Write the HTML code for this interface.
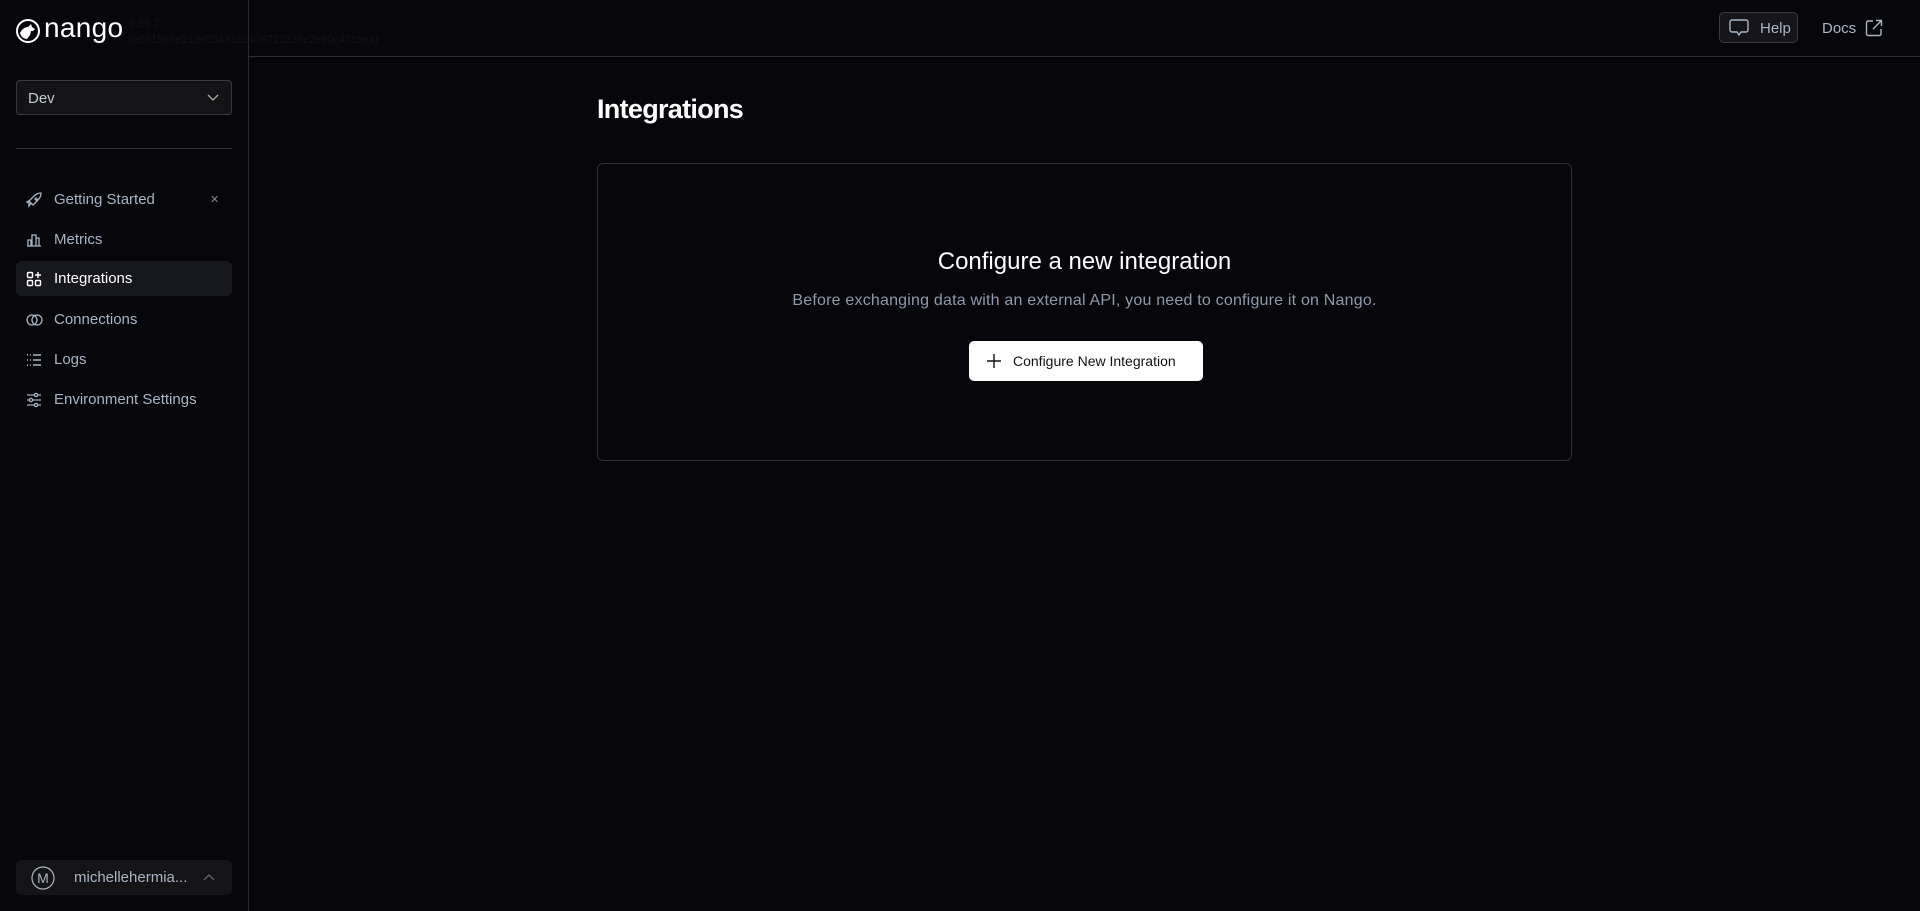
<!DOCTYPE html>
<html><head><meta charset="utf-8"><style>
*{box-sizing:border-box;margin:0;padding:0}
body{width:1920px;height:911px;background:#06060b;font-family:"Liberation Sans",sans-serif;color:#a9b5c5;position:relative;overflow:hidden}
.side{position:absolute;left:0;top:0;width:249px;height:911px;border-right:1px solid #2a2a2e}
.hdr{position:absolute;left:249px;top:56px;right:0;border-top:1px solid #2d2d31}
.logo{position:absolute;left:16px;top:17px;display:flex;align-items:center;color:#fff;font-size:28px;font-weight:normal;letter-spacing:0.3px}
.ver{position:absolute;left:129px;top:16px;font-size:11px;color:#141418;line-height:16px}
.sel{position:absolute;left:16px;top:80px;width:216px;height:35px;border:1px solid #3a3a3e;border-radius:4px;background:#141416;color:#c5ccd6;font-size:15px;padding:9px 11px}
.div{position:absolute;left:16px;top:148px;width:216px;border-top:1px solid #333338}
.nav{position:absolute;left:16px;width:216px;height:35px;border-radius:6px;display:flex;align-items:center;font-size:15px;color:#a9b5c5}
.nav svg{position:absolute;left:10px;top:10px}
.nav span{position:absolute;left:38px}
.nav.act{background:#17171e;color:#fff}
.user{position:absolute;left:16px;top:860px;width:216px;height:35px;border-radius:5px;background:#141416;font-size:15px;color:#a9b5c5}
.help{position:absolute;left:1719px;top:12px;width:79px;height:31px;border:1px solid #3a3a40;border-radius:5px;background:#15151b;font-size:15px;color:#a9b5c5}
h1{position:absolute;left:597px;top:94px;font-size:27px;color:#fff;font-weight:bold;letter-spacing:-0.7px}
.card{position:absolute;left:597px;top:163px;width:975px;height:298px;border:1px solid #2f2f34;border-radius:6px;text-align:center}
.card h2{position:absolute;top:84px;width:100%;font-size:24px;font-weight:normal;color:#fff}
.card p{position:absolute;top:128px;width:100%;font-size:16px;color:#8e9aab;letter-spacing:0.2px}
.btn{position:absolute;left:371px;top:177px;width:234px;height:40px;background:#fff;border-radius:5px;color:#111;font-size:14px;line-height:40px;text-align:left;padding-left:44px}
</style></head><body>
<div class="side">
<div class="logo"><svg width="24" height="24" viewBox="0 0 24 24"><circle cx="12" cy="12" r="11" fill="none" stroke="#fff" stroke-width="2"/><path d="M4 14c2-4 5-6 8-6l3-3 1 3 3 2-2 2-2 0-1 4-3 4c-3 0-6-2-7-6z" fill="#fff"/></svg><span style="margin-left:4px;margin-top:-5px">nango</span></div>
<div class="ver">0.59.7<br>(e5515e6e21de35481ac406721235c2e90c47c5ea)</div>
<div class="sel">Dev<svg style="position:absolute;right:12px;top:13px" width="12" height="8" viewBox="0 0 12 8"><path d="M1 1l5 5 5-5" fill="none" stroke="#aaa" stroke-width="1.3"/></svg></div>
<div class="div"></div>
<div class="nav" style="top:182px"><svg width="16" height="16" viewBox="0 0 16 16" fill="none" stroke="#a9b5c5" stroke-width="1.3"><path d="M5 11l-2 3 0-3-2-1 3-2M10 6a1 1 0 1 0 0.1 0M5 11L3 9l5-5c2-2 5-3 7-3 0 2-1 5-3 7l-5 5z"/></svg><span>Getting Started</span><span style="left:194px;font-size:11px;color:#888">✕</span></div>
<div class="nav" style="top:222px"><svg width="16" height="16" viewBox="0 0 16 16" fill="none" stroke="#a9b5c5" stroke-width="1.3"><path d="M1 14h14M2 14V8h3v6M6 14V3h4v11M10 14V6h3v8"/></svg><span>Metrics</span></div>
<div class="nav act" style="top:261px"><svg width="16" height="16" viewBox="0 0 16 16" fill="none" stroke="#fff" stroke-width="1.4"><rect x="1.5" y="1.5" width="5" height="5" rx="1"/><rect x="1.5" y="9.5" width="5" height="5" rx="1"/><rect x="9.5" y="9.5" width="5" height="5" rx="1"/><path d="M12 1v6M9 4h6"/></svg><span>Integrations</span></div>
<div class="nav" style="top:302px"><svg width="18" height="16" viewBox="0 0 18 16" fill="none" stroke="#a9b5c5" stroke-width="1.3"><circle cx="6" cy="8" r="5"/><circle cx="11" cy="8" r="5"/></svg><span>Connections</span></div>
<div class="nav" style="top:342px"><svg width="16" height="16" viewBox="0 0 16 16" fill="none" stroke="#a9b5c5" stroke-width="1.4"><path d="M1 3h1M1 8h1M1 13h1M4 3h1M4 8h1M4 13h1M7 3h8M7 8h8M7 13h8"/></svg><span>Logs</span></div>
<div class="nav" style="top:382px"><svg width="16" height="16" viewBox="0 0 16 16" fill="none" stroke="#a9b5c5" stroke-width="1.3"><path d="M1 3h14M1 8h14M1 13h14"/><circle cx="10" cy="3" r="1.6" fill="#06060b"/><circle cx="5" cy="8" r="1.6" fill="#06060b"/><circle cx="10" cy="13" r="1.6" fill="#06060b"/></svg><span>Environment Settings</span></div>
<div class="user"><svg style="position:absolute;left:15px;top:6px" width="24" height="24" viewBox="0 0 24 24"><circle cx="12" cy="12" r="11" fill="none" stroke="#a9b5c5" stroke-width="1.2"/><text x="12" y="17" text-anchor="middle" font-size="14" fill="#a9b5c5" font-family="Liberation Sans">M</text></svg><span style="position:absolute;left:58px;top:9px">michellehermia...</span><svg style="position:absolute;left:187px;top:13px" width="12" height="8" viewBox="0 0 12 8"><path d="M1 7l5-5 5 5" fill="none" stroke="#666" stroke-width="1.3"/></svg></div>
</div>
<div class="hdr"></div>
<div class="help"><svg style="position:absolute;left:9px;top:6px" width="20" height="19" viewBox="0 0 20 19" fill="none" stroke="#a9b5c5" stroke-width="1.4"><path d="M3 1h14a2 2 0 0 1 2 2v8a2 2 0 0 1-2 2h-5l-2 3-2-3H3a2 2 0 0 1-2-2V3a2 2 0 0 1 2-2z"/></svg><span style="position:absolute;left:40px;top:7px">Help</span></div>
<div style="position:absolute;left:1822px;top:20px;font-size:15px;color:#a9b5c5">Docs</div>
<svg style="position:absolute;left:1865px;top:19px" width="18" height="18" viewBox="0 0 18 18" fill="none" stroke="#a9b5c5" stroke-width="1.4"><path d="M8 2H3a1.5 1.5 0 0 0-1.5 1.5v11.5A1.5 1.5 0 0 0 3 16.5h11.5a1.5 1.5 0 0 0 1.5-1.5V10M11 1.5h5.5V7M16.5 1.5L8 10"/></svg>
<h1>Integrations</h1>
<div class="card"><h2>Configure a new integration</h2><p>Before exchanging data with an external API, you need to configure it on Nango.</p>
<div class="btn"><svg style="position:absolute;left:18px;top:13px" width="14" height="14" viewBox="0 0 14 14"><path d="M7 0v14M0 7h14" stroke="#111" stroke-width="1.4"/></svg>Configure New Integration</div></div>
</body></html>
